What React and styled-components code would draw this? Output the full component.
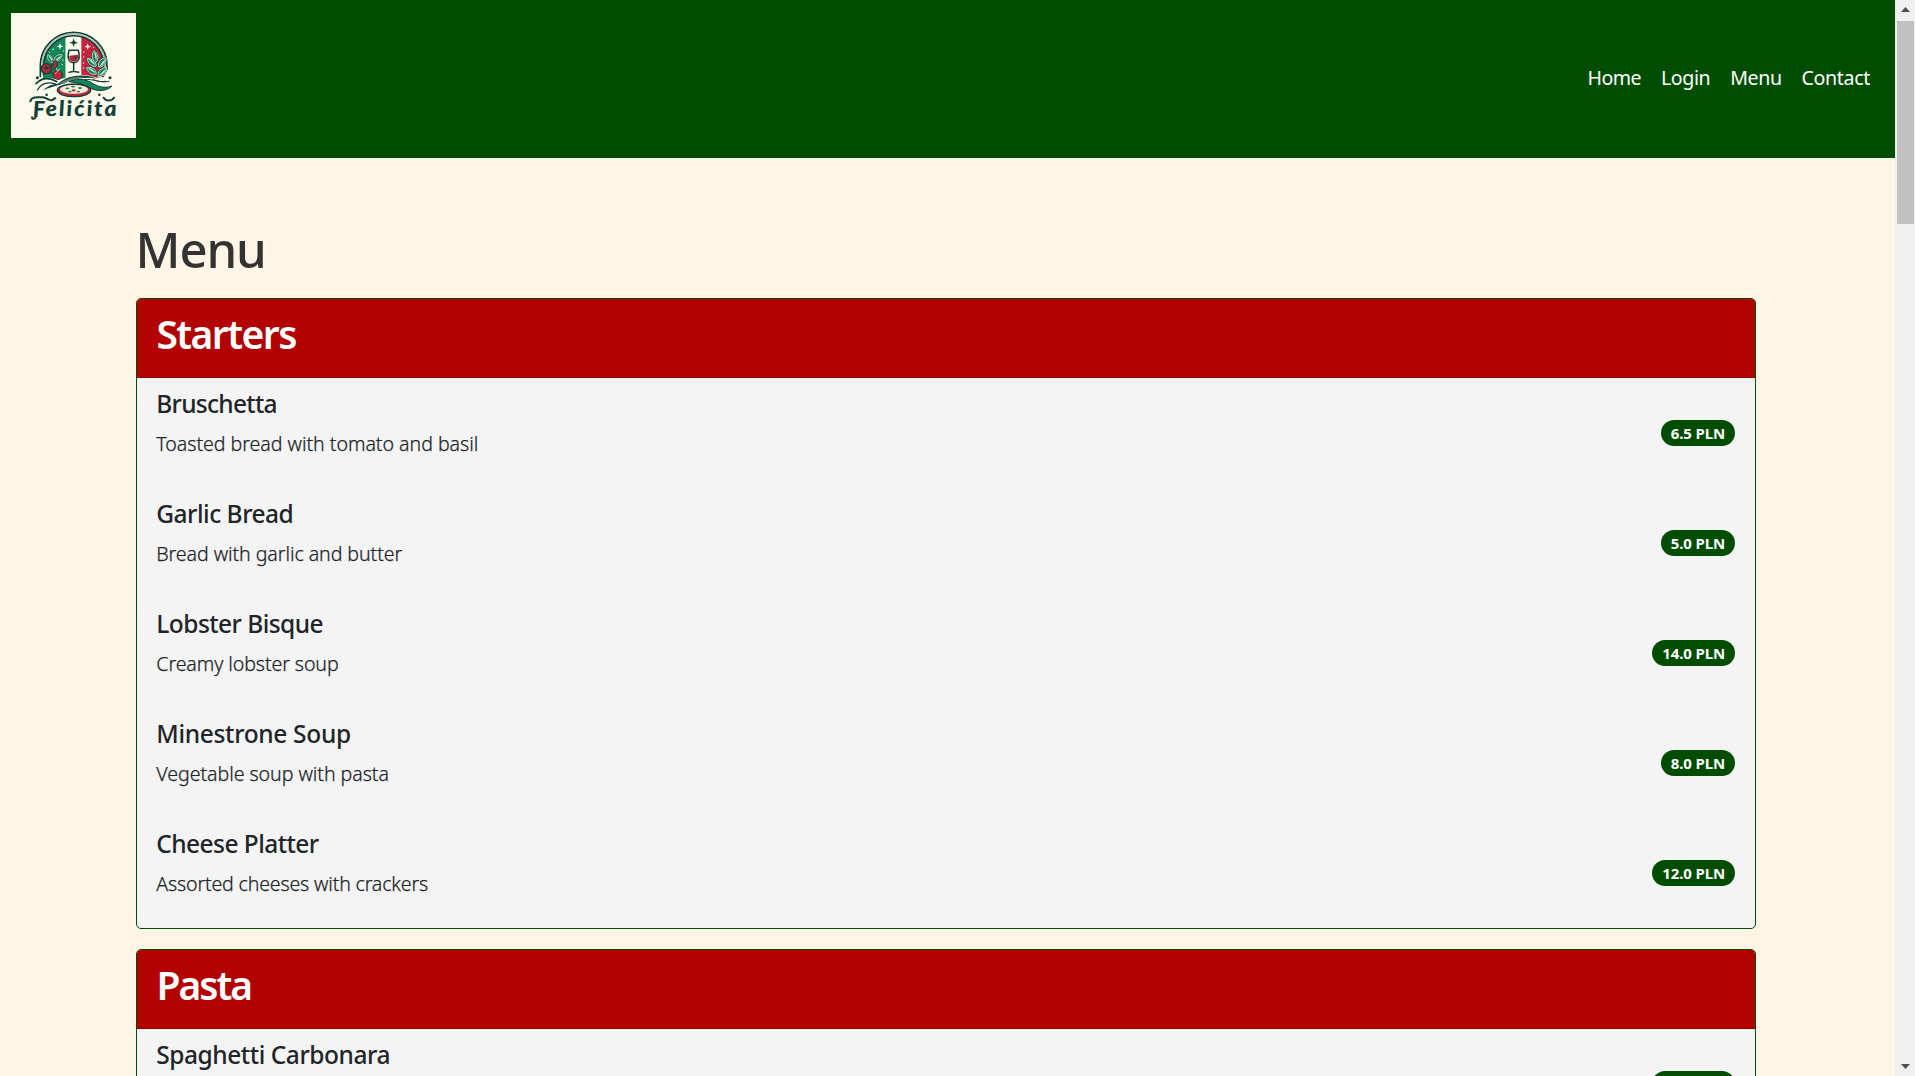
import React from 'react';
import styled, { createGlobalStyle } from 'styled-components';

const GREEN = '#004d00';
const RED = '#b30000';

const GlobalStyle = createGlobalStyle`
  *, *::before, *::after { box-sizing: border-box; }
  html, body { margin: 0; height: 100%; overflow: hidden; }
  body {
    background: #fff5e6;
    color: #212529;
    font-family: "Segoe UI", "Noto Sans", sans-serif;
    font-size: 19.6px;
    line-height: 30px;
  }
`;

const Window = styled.div`
  display: flex;
  width: 100%;
  height: 100vh;
  overflow: hidden;
`;

const Page = styled.div`
  flex: 1;
  min-width: 0;
  overflow: hidden;
`;

const Header = styled.header`
  display: flex;
  align-items: center;
  justify-content: space-between;
  height: 158px;
  padding: 0 25px 7px 11px;
  background: ${GREEN};
`;

const LogoLink = styled.a`
  display: block;
  width: 125px;
  height: 125px;
`;

const LogoSvg = styled.svg`
  display: block;
  width: 100%;
  height: 100%;
`;

const Nav = styled.nav`
  display: flex;
  gap: 20px;
  margin-top: 4px;
`;

const NavLink = styled.a`
  color: #fff;
  white-space: nowrap;
  letter-spacing: ${(p) => p.$tracking}px;
`;

const Main = styled.main`
  padding: 61px 139px 0 136px;
`;

const Title = styled.h1`
  margin: 0 0 19px -0.5px;
  color: #333;
  font-size: 49px;
  font-weight: 500;
  line-height: 60px;
  letter-spacing: -1.1px;
`;

const Card = styled.section`
  margin-bottom: 20px;
  overflow: hidden;
  border: 1px solid ${GREEN};
  border-radius: 5px;
  background: #f4f4f4;
`;

const CardHeader = styled.div`
  height: 79px;
  padding: 11px 19.4px 0;
  border-bottom: 1px solid rgba(0, 0, 0, 0.176);
  background: ${RED};
`;

const CardTitle = styled.h2`
  margin: 0;
  color: #fff;
  font-size: 39px;
  font-weight: 600;
  line-height: 48px;
  letter-spacing: ${(p) => p.$tracking}px;
`;

const List = styled.ul`
  margin: 0;
  padding: 0;
  list-style: none;
`;

const Item = styled.li`
  display: flex;
  align-items: center;
  justify-content: space-between;
  height: 110px;
  padding: 10px 20px 10px 19.3px;
`;

const Dish = styled.div`
  height: 90px;
  padding-top: 1px;
`;

const DishName = styled.h5`
  margin: 0 0 10px;
  font-size: 24.5px;
  font-weight: 500;
  line-height: 30px;
  letter-spacing: ${(p) => p.$tracking}px;
`;

const DishText = styled.p`
  margin: 0;
  font-weight: 300;
  letter-spacing: ${(p) => p.$tracking}px;
  -webkit-text-stroke: 0.25px currentColor;
`;

const Price = styled.span`
  padding: 0 9.75px;
  border-radius: 13px;
  background: ${GREEN};
  color: #fff;
  font-size: 15px;
  font-weight: 700;
  line-height: 26px;
  letter-spacing: -0.08px;
  white-space: nowrap;
`;

const Scrollbar = styled.div`
  display: flex;
  flex-direction: column;
  align-items: center;
  width: 20px;
  padding: 7px 0;
  background: #f0f0f0;
`;

const Thumb = styled.div`
  width: 17px;
  height: 203px;
  margin: 9px 0 auto 1px;
  background: #c1c1c1;
`;

const Arrow = styled.svg`
  display: block;
  width: 9px;
  height: 5px;
  margin-left: 1px;
  fill: #505050;
`;

const links = [
  ['Home', -0.6],
  ['Login', -0.4],
  ['Menu', -0.45],
  ['Contact', -0.35],
];

const sections = [
  {
    title: 'Starters',
    tracking: -1.55,
    dishes: [
      ['Bruschetta', -0.73, 'Toasted bread with tomato and basil', -0.04, '6.5 PLN'],
      ['Garlic Bread', -0.5, 'Bread with garlic and butter', -0.08, '5.0 PLN'],
      ['Lobster Bisque', -0.55, 'Creamy lobster soup', -0.1, '14.0 PLN'],
      ['Minestrone Soup', -0.33, 'Vegetable soup with pasta', -0.06, '8.0 PLN'],
      ['Cheese Platter', -0.56, 'Assorted cheeses with crackers', -0.18, '12.0 PLN'],
    ],
  },
  {
    title: 'Pasta',
    tracking: -2,
    dishes: [['Spaghetti Carbonara', -0.46, 'Spaghetti with eggs, cheese and bacon', 0, '15.0 PLN']],
  },
];

const INK = '#123f36';
const LEAF = '#14875a';
const PAPER = '#fbf8ec';

const leaf = 'M0 0 C-13 -9 -14 -25 -2 -38 C10 -27 12 -10 0 0Z';

function Leaf({ x, y, r, s = 1 }) {
  return (
    <g transform={`translate(${x} ${y}) rotate(${r}) scale(${s})`}>
      <path d={leaf} fill={INK} stroke={INK} strokeWidth="3" />
      <path d={leaf} fill={LEAF} stroke="#e8f1e4" strokeWidth="2.5" transform="translate(0 -2) scale(.9)" />
      <path d="M0 -6 C5 -13 5 -25 -1 -33 C-2 -22 -1 -12 0 -6Z" fill="#c9e3d0" />
    </g>
  );
}

function Sparkle({ x, y, r, fill }) {
  const k = r * 0.25;
  return (
    <path
      fill={fill}
      d={`M${x} ${y - r}L${x + k} ${y - k}L${x + r} ${y}L${x + k} ${y + k}L${x} ${y + r}L${x - k} ${y + k}L${x - r} ${y}L${x - k} ${y - k}Z`}
    />
  );
}

function Logo() {
  return (
    <LogoSvg viewBox="33 39 375 375" role="img" aria-label="Felicita">
      <defs>
        <clipPath id="dome">
          <path d="M129 236 V197 A92 92 0 0 1 313 197 V236Z" />
        </clipPath>
      </defs>
      <rect x="33" y="39" width="375" height="375" fill={PAPER} />
      <g clipPath="url(#dome)">
        <rect x="125" y="100" width="72" height="140" fill={LEAF} />
        <rect x="197" y="100" width="47" height="140" fill={PAPER} />
        <rect x="244" y="100" width="75" height="140" fill="#c5253c" />
      </g>
      <path d="M121 232 V197 A100 100 0 0 1 321 197 V210" fill="none" stroke={INK} strokeWidth="5" />
      <path d="M126 225 V197 A95 95 0 0 1 316 197" fill="none" stroke="#a9bfb0" strokeWidth="4" />
      <path d="M131 225 V197 A90 90 0 0 1 311 197" fill="none" stroke={INK} strokeWidth="4.5" />
      <Sparkle x={221} y={128} r={13} fill={INK} />
      <Sparkle x={180} y={139} r={10} fill="#fff" />
      <Sparkle x={263} y={140} r={10} fill="#fff" />
      <g fill="#e6eee0">
        <circle cx="159" cy="148" r="2.4" />
        <circle cx="149" cy="157" r="2" />
        <circle cx="191" cy="153" r="2" />
        <circle cx="189" cy="180" r="2" />
        <circle cx="187" cy="194" r="2" />
        <circle cx="251" cy="156" r="2" />
        <circle cx="251" cy="171" r="2" />
        <circle cx="250" cy="189" r="2" />
        <circle cx="251" cy="204" r="2" />
        <circle cx="280" cy="142" r="2" />
      </g>
      <path d="M207 151 H235 C241 172 237 188 221 188 C205 188 201 172 207 151Z" fill={PAPER} stroke={INK} strokeWidth="4.5" />
      <path d="M208 167 L234 164 C236 176 231 185 221 185 C211 185 207 176 208 167Z" fill="#b62739" />
      <path d="M222 172 H232 M224 176 L230 180" stroke={INK} strokeWidth="2.5" />
      <path d="M221 188 V214 M207 217 Q221 212 236 217" fill="none" stroke={INK} strokeWidth="4.5" strokeLinecap="round" />
      <path d="M154 222 C150 202 154 190 163 180 M165 212 C164 200 168 188 178 178" fill="none" stroke={INK} strokeWidth="3.5" />
      <Leaf x={160} y={190} r={-30} s={0.86} />
      <Leaf x={160} y={184} r={56} s={0.92} />
      <path d="M161 208 C157 194 160 183 166 181 C175 190 172 202 161 208Z" fill="#c5253c" stroke={INK} strokeWidth="2.5" />
      <circle cx="139" cy="206" r="15" fill="#b8283b" stroke={INK} strokeWidth="4" />
      <path d="M130 201 L137 203 L139 196 L142 202 L149 200 L144 207 L137 209Z" fill={INK} />
      <circle cx="173" cy="225" r="14" fill="#c5253c" stroke={INK} strokeWidth="3" />
      <path d="M173 214 L169 205 M173 214 L179 206" stroke={PAPER} strokeWidth="2.5" />
      <path d="M165 222 Q167 217 171 218" fill="none" stroke="#f1c3bd" strokeWidth="2.5" />
      <Leaf x={289} y={188} r={-8} s={1.02} />
      <Leaf x={290} y={200} r={-46} s={1.02} />
      <Leaf x={295} y={203} r={40} s={1.04} />
      <Leaf x={291} y={223} r={-54} s={1.02} />
      <Leaf x={293} y={231} r={46} s={1.08} />
      <path d="M104 252 C132 226 158 236 180 242 C210 222 247 218 291 233 C305 230 314 230 321 234 L329 266 C280 270 252 252 225 252 L170 263 L112 274Z" fill={PAPER} />
      <path d="M108 251 C125 233 148 232 171 245" fill="none" stroke={INK} strokeWidth="5" strokeLinecap="round" />
      <path d="M112 270 C124 250 144 245 166 252" fill="none" stroke={INK} strokeWidth="4" strokeLinecap="round" />
      <path d="M130 271 C143 257 155 253 174 251 C202 226 250 219 292 236 C253 229 218 236 190 250 C177 257 159 258 130 271Z" fill={INK} />
      <path d="M178 250 C205 233 235 226 258 232 C229 234 207 242 192 252Z" fill="#5f8779" />
      <path d="M207 245 C240 231 262 240 281 252 C298 262 318 265 336 258 C318 276 289 274 267 263 C247 252 231 247 207 245Z" fill={LEAF} stroke={INK} strokeWidth="3" />
      <path d="M254 239 C280 235 300 251 327 244 M280 239 C294 245 308 246 317 244" fill="none" stroke={INK} strokeWidth="3" strokeLinecap="round" />
      <ellipse cx="222" cy="271" rx="50" ry="19" fill="#c5253c" stroke={INK} strokeWidth="4" />
      <ellipse cx="222" cy="268" rx="42" ry="13" fill="#f4efdc" />
      <g fill={LEAF}>
        <ellipse cx="202" cy="265" rx="6" ry="2.6" />
        <ellipse cx="219" cy="260" rx="6" ry="2.4" />
        <ellipse cx="240" cy="264" rx="6" ry="2.8" />
        <ellipse cx="210" cy="275" rx="5" ry="2.4" />
        <ellipse cx="235" cy="275" rx="5" ry="2.4" />
      </g>
      <ellipse cx="221" cy="271" rx="6" ry="3.5" fill="#c5253c" />
      <g fill={INK}>
        <circle cx="112" cy="233" r="4.5" />
        <circle cx="330" cy="233" r="4.5" />
        <circle cx="140" cy="284" r="3.8" />
        <circle cx="298" cy="284" r="3.8" />
      </g>
      <g fill="none" stroke={INK} strokeWidth="6" strokeLinecap="round">
        <path d="M91 304 C94 289 112 291 128 292 C143 294 148 302 155 301 C161 300 160 295 166 295" />
        <path d="M311 293 C316 304 336 305 342 293" />
        <path d="M96 352 C96 359 106 358 108 348" />
      </g>
      <g fontFamily="Lato, sans-serif" fontStyle="italic" fontWeight="900" fill={INK}>
        <text transform="translate(100 352) skewX(3)" fontSize="66" textLength="36" lengthAdjust="spacingAndGlyphs">F</text>
        <text transform="translate(138 348) skewX(4) scale(1.1 1)" fontSize="64" textLength="194" lengthAdjust="spacing">elićita</text>
      </g>
    </LogoSvg>
  );
}

function MenuSection({ title, tracking, dishes }) {
  return (
    <Card>
      <CardHeader>
        <CardTitle $tracking={tracking}>{title}</CardTitle>
      </CardHeader>
      <List>
        {dishes.map(([name, nameTracking, text, textTracking, price]) => (
          <Item key={name}>
            <Dish>
              <DishName $tracking={nameTracking}>{name}</DishName>
              <DishText $tracking={textTracking}>{text}</DishText>
            </Dish>
            <Price>{price}</Price>
          </Item>
        ))}
      </List>
    </Card>
  );
}

export default function App() {
  return (
    <>
      <GlobalStyle />
      <Window>
        <Page>
          <Header>
            <LogoLink>
              <Logo />
            </LogoLink>
            <Nav>
              {links.map(([label, tracking]) => (
                <NavLink key={label} $tracking={tracking}>
                  {label}
                </NavLink>
              ))}
            </Nav>
          </Header>
          <Main>
            <Title>Menu</Title>
            {sections.map((section) => (
              <MenuSection key={section.title} {...section} />
            ))}
          </Main>
        </Page>
        <Scrollbar>
          <Arrow viewBox="0 0 9 5">
            <path d="M4.5 0 L9 5 H0Z" />
          </Arrow>
          <Thumb />
          <Arrow viewBox="0 0 9 5">
            <path d="M0 0 H9 L4.5 5Z" />
          </Arrow>
        </Scrollbar>
      </Window>
    </>
  );
}
